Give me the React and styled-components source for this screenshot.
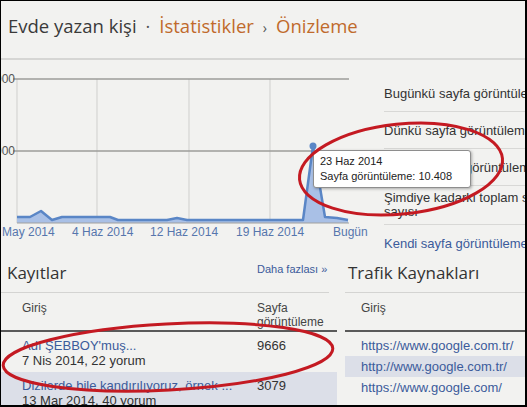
import styled, { createGlobalStyle } from 'styled-components'

const GlobalStyle = createGlobalStyle`
  html, body {
    margin: 0;
    padding: 0;
    background: #000;
  }
  * { box-sizing: border-box; }
`;

const Frame = styled.div`
  position: relative;
  width: 527px;
  height: 407px;
  overflow: hidden;
  background: #f2f2f0;
  border-style: solid;
  border-color: #000;
  border-width: 1px 2px 2px 1px;
  font-family: "Liberation Sans", Arial, sans-serif;
  color: #333;
  display: flex;
  flex-direction: column;
`;

const Header = styled.div`
  height: 59px;
  flex: none;
  border-bottom: 2px solid #d6d6d4;
  padding: 12px 0 0 7px;
  font-family: "Open Sans", sans-serif;
  font-size: 18.5px;
  color: #3a3a3a;
  white-space: nowrap;
`;

const Crumb = styled.span`
  color: ${({ accent }) => (accent ? '#c06a2c' : '#3a3a3a')};
`;

const Sep = styled.span`
  color: #555;
  margin: 0 9px;
  font-size: ${({ small }) => (small ? '14px' : '18px')};
`;

const Top = styled.div`
  position: relative;
  height: 190px;
  flex: none;
  display: flex;
`;

const ChartBox = styled.div`
  width: 383px;
  flex: none;
`;

const Stats = styled.ul`
  list-style: none;
  margin: 0;
  padding: 15px 0 0 0;
  flex: 1;
  min-width: 0;
`;

const Stat = styled.li`
  padding: ${({ tight }) => (tight ? '5px 0 5px' : '12px 0 10px')};
  line-height: 14px;
  font-size: 13px;
  white-space: ${({ tight }) => (tight ? 'normal' : 'nowrap')};
  width: ${({ tight }) => (tight ? '262px' : 'auto')};
  color: ${({ link }) => (link ? '#3b5b9b' : '#333')};
  border-bottom: ${({ link }) => (link ? 'none' : '1px solid #d8d8d6')};
`;

const Tooltip = styled.div`
  position: absolute;
  z-index: 2;
  left: 312px;
  top: 90px;
  width: 158px;
  height: 38px;
  padding: 3px 0 0 6px;
  background: #fff;
  border: 1px solid #8e8e8e;
  border-radius: 3px;
  box-shadow: 1px 1px 3px rgba(0, 0, 0, 0.3);
  font-size: 11px;
  line-height: 15px;
  color: #222;
  white-space: nowrap;
`;

const Bottom = styled.div`
  display: grid;
  grid-template-columns: 336px 1fr;
  column-gap: 8px;
  flex: 1;
`;

const Panel = styled.div`
  display: flex;
  flex-direction: column;
`;

const PanelHead = styled.div`
  display: flex;
  justify-content: space-between;
  align-items: flex-start;
  height: 43px;
  padding: 11px 0 0 ${({ inset }) => inset}px;
  border-bottom: 1px solid #d4d4d2;
  margin-right: ${({ trim }) => trim || 0}px;
`;

const PanelTitle = styled.div`
  font-family: "Open Sans", sans-serif;
  font-size: 17px;
  color: #333;
`;

const More = styled.a`
  font-size: 11px;
  color: #3b5b9b;
  margin-top: 2px;
  width: 72px;
`;

const TableHead = styled.div`
  display: grid;
  grid-template-columns: ${({ cols }) => cols};
  height: 39px;
  padding: 8px 0 0 ${({ inset }) => inset}px;
  border-bottom: 2px solid #5a5a5a;
  font-size: 12px;
  line-height: 14px;
  color: #444;
`;

const Row = styled.div`
  display: grid;
  grid-template-columns: ${({ cols }) => cols};
  padding: ${({ compact }) => (compact ? '3px 0 3px' : '6px 0 4px')};
  padding-left: ${({ inset }) => inset}px;
  background: ${({ shaded }) => (shaded ? '#dcdfe8' : 'transparent')};
  font-size: 13px;
  line-height: 15px;
  white-space: nowrap;
`;

const Title = styled.div`
  color: #3b5b9b;
`;

const Meta = styled.div`
  color: #333;
`;

const Count = styled.div`
  color: #333;
`;

const Src = styled.div`
  color: #3b5b9b;
`;

const Marks = styled.svg`
  position: absolute;
  z-index: 3;
  left: 0;
  top: 0;
  pointer-events: none;
`;

const line = [
  [16, 157], [29, 157], [40, 151], [51, 160], [61, 157], [109, 157], [117, 160],
  [166, 160], [176, 158], [186, 160], [302, 160], [312, 86], [324, 157], [336, 158], [347, 160],
];

function Chart() {
  const pts = line.map(p => p.join(',')).join(' ');
  const area = `16,163 ${pts} 347,163`;
  return (
    <svg width="383" height="190" viewBox="0 0 383 190">
      {[96, 188, 269].map(x => (
        <line key={x} x1={x} y1="19" x2={x} y2="163" stroke="#cfcfcd" strokeWidth="1" />
      ))}
      <line x1="16" y1="19" x2="16" y2="163" stroke="#cfcfcd" />
      <line x1="12" y1="19" x2="348" y2="19" stroke="#9c9c9a" strokeWidth="1.5" />
      <line x1="12" y1="91" x2="348" y2="91" stroke="#9c9c9a" strokeWidth="1.5" />
      <text x="14" y="23" textAnchor="end" fontSize="12" fontFamily="Liberation Sans, Arial" fill="#555">12.000</text>
      <text x="14" y="95" textAnchor="end" fontSize="12" fontFamily="Liberation Sans, Arial" fill="#555">6.000</text>
      <polygon points={area} fill="#a9c0e6" />
      <polyline points={pts} fill="none" stroke="#5a86c6" strokeWidth="2.5" strokeLinejoin="round" />
      <line x1="16" y1="163" x2="348" y2="163" stroke="#a0a09e" strokeWidth="1" />
      <circle cx="312" cy="86" r="3.5" fill="#5a86c6" />
      <g fontSize="12" fontFamily="Liberation Sans, Arial" fill="#5676ad">
        <text x="1" y="176">May 2014</text>
        <text x="71" y="176">4 Haz 2014</text>
        <text x="149" y="176">12 Haz 2014</text>
        <text x="235" y="176">19 Haz 2014</text>
        <text x="332" y="176">Bugün</text>
      </g>
    </svg>
  );
}

export default function App() {
  return (
    <>
      <GlobalStyle />
      <Frame>
        <Header>
          <Crumb>Evde yazan kişi</Crumb>
          <Sep>·</Sep>
          <Crumb accent>İstatistikler</Crumb>
          <Sep small>›</Sep>
          <Crumb accent>Önizleme</Crumb>
        </Header>

        <Top>
          <ChartBox>
            <Chart />
          </ChartBox>
          <Stats>
            <Stat>Bugünkü sayfa görüntüleme sayısı</Stat>
            <Stat>Dünkü sayfa görüntüleme sayısı</Stat>
            <Stat>Bu ayki sayfa görüntüleme sayısı</Stat>
            <Stat tight>Şimdiye kadarki toplam sayfa görüntüleme sayısı</Stat>
            <Stat link>Kendi sayfa görüntüleme işlemlerimi izleme</Stat>
          </Stats>
          <Tooltip>
            23 Haz 2014
            <br />
            Sayfa görüntüleme: 10.408
          </Tooltip>
        </Top>

        <Bottom>
          <Panel>
            <PanelHead inset={6} trim={8}>
              <PanelTitle>Kayıtlar</PanelTitle>
              <More>Daha fazlası »</More>
            </PanelHead>
            <TableHead cols="235px 1fr" inset={21}>
              <div>Giriş</div>
              <div>Sayfa<br />görüntüleme</div>
            </TableHead>
            <Row cols="235px 1fr" inset={21}>
              <div>
                <Title>Adı ŞEBBOY'muş...</Title>
                <Meta>7 Nis 2014, 22 yorum</Meta>
              </div>
              <Count>9666</Count>
            </Row>
            <Row cols="235px 1fr" inset={21} shaded>
              <div>
                <Title>Dizilerde bile kandırılıyoruz, örnek ...</Title>
                <Meta>13 Mar 2014, 40 yorum</Meta>
              </div>
              <Count>3079</Count>
            </Row>
          </Panel>

          <Panel>
            <PanelHead inset={3}>
              <PanelTitle>Trafik Kaynakları</PanelTitle>
            </PanelHead>
            <TableHead cols="1fr" inset={16}>
              <div>Giriş</div>
            </TableHead>
            <Row cols="1fr" inset={16} compact style={{ paddingTop: 6 }}>
              <Src>https://www.google.com.tr/</Src>
            </Row>
            <Row cols="1fr" inset={16} compact shaded>
              <Src>http://www.google.com.tr/</Src>
            </Row>
            <Row cols="1fr" inset={16} compact>
              <Src>https://www.google.com/</Src>
            </Row>
          </Panel>
        </Bottom>

        <Marks width="527" height="407" viewBox="0 0 527 407">
          <ellipse cx="400" cy="168" rx="102" ry="45" transform="rotate(-6 400 168)"
            fill="none" stroke="#c41a22" strokeWidth="3" />
          <ellipse cx="167" cy="356" rx="165" ry="33" transform="rotate(-3 167 356)"
            fill="none" stroke="#c41a22" strokeWidth="3" />
        </Marks>
      </Frame>
    </>
  );
}
